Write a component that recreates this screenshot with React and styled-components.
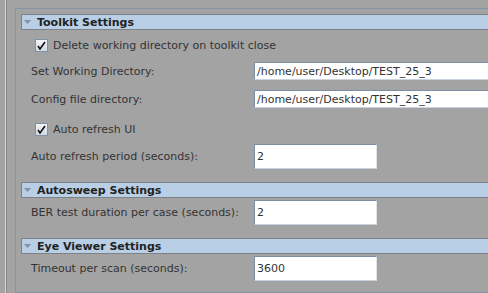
import React from "react";
import styled, { createGlobalStyle } from "styled-components";

const GlobalStyle = createGlobalStyle`
  html, body { margin: 0; padding: 0; background: #a3a3a3; overflow: hidden; }
  body { font-family: "DejaVu Sans", "Liberation Sans", sans-serif; font-size: 11px; color: #333; }
`;

const Root = styled.div`
  display: flex;
  width: 488px;
  height: 293px;
  overflow: hidden;
  background: #a3a3a3;
`;

const Divider = styled.div`
  flex: none;
  width: 1px;
  margin-left: 5px;
  border-left: 1px solid #d2d2d2;
  background: #8a8a8a;
`;

const Panel = styled.div`
  flex: none;
  width: 500px;
  margin-left: 8px;
  margin-top: 8px;
  height: 278px;
  border: 1px solid #8595a8;
  border-right: none;
  box-shadow: 0 1px 0 #f4f4f4;
  padding: 5px 0 0 5px;
  display: flex;
  flex-direction: column;
`;

const Header = styled.div`
  display: flex;
  align-items: center;
  height: 14px;
  margin-top: ${(p) => p.$mt || 0}px;
  background: #b8cfe5;
  border: 1px solid #7e8186;
  border-right: none;
  font-weight: bold;
  color: #222;
  font-size: 11px;
`;

const Arrow = styled.svg`
  flex: none;
  margin: 0 6px 0 2px;
`;

const Row = styled.div`
  display: flex;
  align-items: center;
  height: ${(p) => p.$h}px;
  margin-top: ${(p) => p.$mt}px;
  padding-left: 10px;
`;

const Label = styled.span`
  flex: none;
  width: 223px;
  white-space: nowrap;
  color: #333;
`;

const Field = styled.div`
  box-sizing: border-box;
  height: ${(p) => p.$h}px;
  width: ${(p) => (p.$w ? `${p.$w}px` : "260px")};
  background: #fff;
  border: 1px solid #7b8ea3;
  border-right-color: #dfe5eb;
  border-bottom-color: #c9d3dd;
  padding-left: 2px;
  display: flex;
  align-items: center;
  color: #333;
  white-space: nowrap;
`;

const CheckRow = styled.div`
  display: flex;
  align-items: center;
  height: 13px;
  margin-top: ${(p) => p.$mt}px;
  padding-left: 14px;
  gap: 5px;
  color: #333;
`;

const Box = styled.div`
  box-sizing: border-box;
  width: 13px;
  height: 13px;
  border: 1px solid #7f91a5;
  background: linear-gradient(#f2f5f8, #cfd9e3);
  display: flex;
  align-items: center;
  justify-content: center;
`;

const Check = ({ label, mt }) => (
  <CheckRow $mt={mt}>
    <Box>
      <svg width="9" height="9" viewBox="0 0 9 9">
        <path d="M1 5 L3 8 L8 1" fill="none" stroke="#111" strokeWidth="1.6" />
      </svg>
    </Box>
    <span>{label}</span>
  </CheckRow>
);

const SectionHeader = ({ title, mt }) => (
  <Header $mt={mt}>
    <Arrow width="7" height="4" viewBox="0 0 7 4">
      <path d="M0 0 H7 L3.5 4 Z" fill="#8494a6" />
    </Arrow>
    {title}
  </Header>
);

const FieldRow = ({ label, value, h, w, mt }) => (
  <Row $h={h} $mt={mt}>
    <Label>{label}</Label>
    <Field $h={h} $w={w}>{value}</Field>
  </Row>
);

export default function App() {
  return (
    <>
      <GlobalStyle />
      <Root>
        <Divider />
        <Panel>
          <SectionHeader title="Toolkit Settings" />
          <Check mt={9} label="Delete working directory on toolkit close" />
          <FieldRow mt={10} h={18} label="Set Working Directory:" value="/home/user/Desktop/TEST_25_3" />
          <FieldRow mt={10} h={18} label="Config file directory:" value="/home/user/Desktop/TEST_25_3" />
          <Check mt={15} label="Auto refresh UI" />
          <FieldRow mt={8} h={25} w={123} label="Auto refresh period (seconds):" value="2" />
          <SectionHeader mt={13} title="Autosweep Settings" />
          <FieldRow mt={2} h={25} w={123} label="BER test duration per case (seconds):" value="2" />
          <SectionHeader mt={13} title="Eye Viewer Settings" />
          <FieldRow mt={2} h={25} w={123} label="Timeout per scan (seconds):" value="3600" />
        </Panel>
      </Root>
    </>
  );
}
